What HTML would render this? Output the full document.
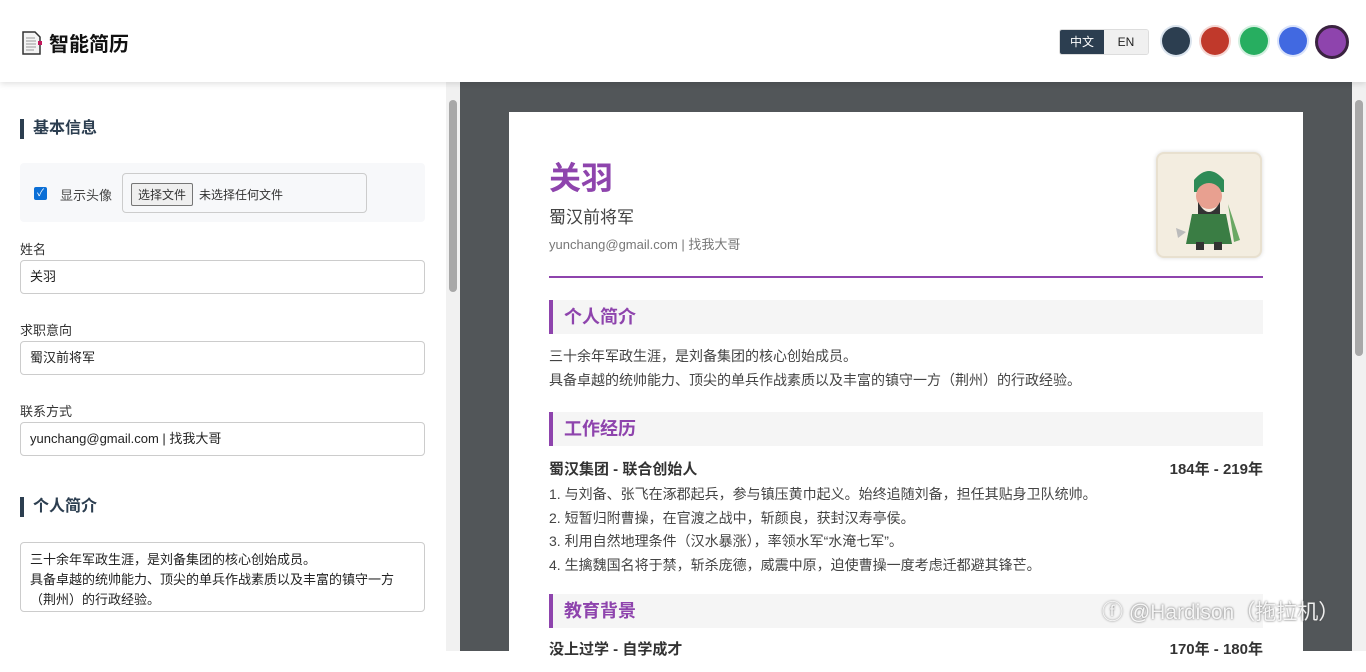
<!DOCTYPE html>
<html><head><meta charset="utf-8"><style>
*{box-sizing:border-box;margin:0;padding:0}
body{width:1366px;height:651px;overflow:hidden;font-family:"Liberation Sans","Noto Sans CJK SC",sans-serif;background:#fff;position:relative;color:#333}
.hdr{position:absolute;left:0;top:0;width:1366px;height:82px;background:#fff;box-shadow:0 2px 6px rgba(0,0,0,.12);z-index:5}
.logo{position:absolute;left:21px;top:28px;font-size:20px;font-weight:bold;color:#111;display:flex;align-items:center;gap:6px}
.lang{position:absolute;left:1059px;top:29px;display:flex;border:1px solid #ddd;border-radius:3px;overflow:hidden;font-size:12px}
.lang div{width:44px;height:24px;line-height:24px;text-align:center}
.dot{position:absolute;top:27px;width:28px;height:28px;border-radius:50%}
.left{position:absolute;left:0;top:82px;width:460px;height:569px;background:#fff}
.sb{position:absolute;width:14px;background:#f1f1f1}
.thumb{position:absolute;left:3px;width:8px;background:#a8a8a8;border-radius:4px}
.sec{position:absolute;left:20px;font-size:16px;font-weight:bold;color:#2c3e50;border-left:4px solid #2c3e50;padding-left:9px;line-height:20px}
.lbl{position:absolute;left:20px;font-size:13px;color:#333}
.inp{position:absolute;left:20px;width:405px;height:34px;border:1px solid #ccc;border-radius:4px;font-size:13px;padding:0 9px;line-height:32px;color:#222}
.right{position:absolute;left:460px;top:82px;width:906px;height:569px;background:#525659}
.paper{position:absolute;left:509px;top:112px;width:794px;height:560px;background:#fff;padding:0 40px}
.pt{position:absolute;left:40px;right:40px;height:34px;background:#f5f5f5;border-left:4px solid #8e44ad;color:#8e44ad;font-size:18px;font-weight:bold;padding-left:11px;line-height:34px}
.tx{position:absolute;left:40px;font-size:14px;color:#444;line-height:23.5px}
</style></head><body>
<div class="hdr">
<div class="logo"><svg width="22" height="24" viewBox="0 0 22 24"><path d="M2 1h12l5 5v17H2z" fill="#f4f4f4" stroke="#333" stroke-width="1.5"/><path d="M5 7h9M5 10h10M5 13h10M5 16h10M5 19h8" stroke="#999"/><rect x="17" y="10" width="4" height="4" fill="#c2185b"/></svg>智能简历</div>
<div class="lang"><div style="background:#2c3e50;color:#fff">中文</div><div style="background:#f0f0f0;color:#222">EN</div></div>
<div class="dot" style="left:1162px;background:#2c3e50;box-shadow:0 0 0 2px #dbe4ee"></div>
<div class="dot" style="left:1201px;background:#c0392b;box-shadow:0 0 0 2px #f4d8d5"></div>
<div class="dot" style="left:1240px;background:#27ae60;box-shadow:0 0 0 2px #d4efe0"></div>
<div class="dot" style="left:1279px;background:#4169e1;box-shadow:0 0 0 2px #dae3fa"></div>
<div class="dot" style="left:1315px;top:25px;width:34px;height:34px;background:#8e44ad;border:3px solid #3a2340"></div>
</div>
<div class="left">
<div class="sec" style="top:37px">基本信息</div>
<div style="position:absolute;left:20px;top:81px;width:405px;height:59px;background:#f7f8fa;border-radius:4px">
<div style="position:absolute;left:14px;top:24px;width:13px;height:13px;background:#0b6fd6;border-radius:2px;color:#fff;font-size:10px;line-height:13px;text-align:center">✓</div>
<div style="position:absolute;left:40px;top:22px;font-size:13px;color:#444">显示头像</div>
<div style="position:absolute;left:102px;top:10px;width:245px;height:40px;border:1px solid #ccc;border-radius:4px;background:#f7f8fa;font-size:12px">
<span style="position:absolute;left:8px;top:9px;border:1px solid #767676;background:#efefef;padding:2px 6px;border-radius:2px">选择文件</span>
<span style="position:absolute;left:76px;top:12px">未选择任何文件</span></div></div>
<div class="lbl" style="top:157px">姓名</div><div class="inp" style="top:178px">关羽</div>
<div class="lbl" style="top:238px">求职意向</div><div class="inp" style="top:259px">蜀汉前将军</div>
<div class="lbl" style="top:319px">联系方式</div><div class="inp" style="top:340px">yunchang@gmail.com | 找我大哥</div>
<div class="sec" style="top:415px">个人简介</div>
<div class="inp" style="top:460px;height:70px;line-height:20px;padding-top:7px">三十余年军政生涯，是刘备集团的核心创始成员。<br>具备卓越的统帅能力、顶尖的单兵作战素质以及丰富的镇守一方（荆州）的行政经验。</div>
<div class="sb" style="left:446px;top:0;height:569px"><div class="thumb" style="top:18px;height:192px"></div></div>
</div>
<div class="right"><div class="sb" style="left:892px;top:0;height:569px;background:#f1f1f1"><div class="thumb" style="top:18px;height:256px"></div></div></div>
<div class="paper">
<div style="position:absolute;left:40px;top:46px;font-size:32px;font-weight:bold;color:#8e44ad;line-height:40px">关羽</div>
<div style="position:absolute;left:40px;top:91px;font-size:17px;color:#444">蜀汉前将军</div>
<div style="position:absolute;left:40px;top:122px;font-size:13px;color:#777">yunchang@gmail.com | 找我大哥</div>
<div style="position:absolute;left:647px;top:40px;width:106px;height:106px;border-radius:8px;background:#f3ede0;border:2px solid #e8e0cf;box-shadow:0 0 4px rgba(0,0,0,.15)">
<svg width="102" height="102" viewBox="0 0 102 102"><path d="M36 26q15-18 30 0v12H36z" fill="#2e8b57"/><circle cx="51" cy="42" r="13" fill="#e8a090"/><path d="M40 48q11 20 22 0v12H40z" fill="#333"/><path d="M34 60h34l6 30H28z" fill="#3a7d44"/><path d="M70 50l12 36-6 2z" fill="#6aa864"/><rect x="38" y="88" width="8" height="8" fill="#333"/><rect x="56" y="88" width="8" height="8" fill="#333"/><path d="M18 74l10 4-8 6z" fill="#bbb"/></svg></div>
<div style="position:absolute;left:40px;right:40px;top:164px;height:2px;background:#8e44ad"></div>
<div class="pt" style="top:188px">个人简介</div>
<div class="tx" style="top:233px">三十余年军政生涯，是刘备集团的核心创始成员。<br>具备卓越的统帅能力、顶尖的单兵作战素质以及丰富的镇守一方（荆州）的行政经验。</div>
<div class="pt" style="top:300px">工作经历</div>
<div style="position:absolute;left:40px;right:40px;top:346px;font-size:15px;font-weight:bold;color:#333;display:flex;justify-content:space-between"><span>蜀汉集团 - 联合创始人</span><span>184年 - 219年</span></div>
<div class="tx" style="top:371px">1. 与刘备、张飞在涿郡起兵，参与镇压黄巾起义。始终追随刘备，担任其贴身卫队统帅。<br>2. 短暂归附曹操，在官渡之战中，斩颜良，获封汉寿亭侯。<br>3. 利用自然地理条件（汉水暴涨），率领水军“水淹七军”。<br>4. 生擒魏国名将于禁，斩杀庞德，威震中原，迫使曹操一度考虑迁都避其锋芒。</div>
<div class="pt" style="top:482px">教育背景</div>
<div style="position:absolute;left:40px;right:40px;top:526px;font-size:15px;font-weight:bold;color:#333;display:flex;justify-content:space-between"><span>没上过学 - 自学成才</span><span>170年 - 180年</span></div>
</div>
<div style="position:absolute;left:1102px;top:596px;font-size:21px;color:rgba(255,255,255,.9);text-shadow:0 0 2px #555">ⓕ @Hardison（拖拉机）</div>
</body></html>
